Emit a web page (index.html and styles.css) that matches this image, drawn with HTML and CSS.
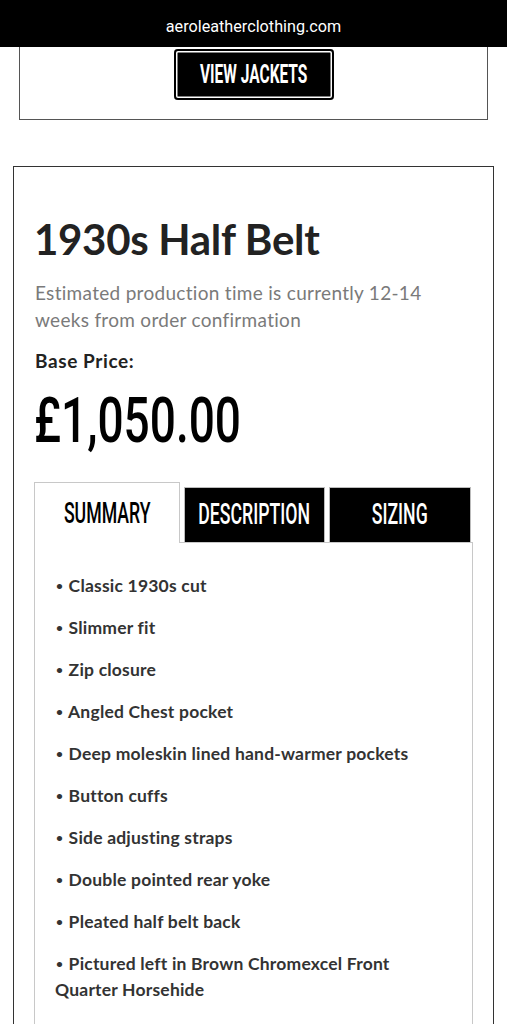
FILE: index.html
```html
<!DOCTYPE html>
<html lang="en">
<head>
<meta charset="utf-8">
<title>1930s Half Belt</title>
<link rel="stylesheet" href="styles.css">
</head>
<body>
<div class="urlbar">aeroleatherclothing.com</div>
<div class="promo">
  <a class="btn" href="#"><span class="cond">VIEW JACKETS</span></a>
</div>
<div class="product">
  <h1 class="title">1930s Half Belt</h1>
  <p class="lead">Estimated production time is currently 12-14 weeks from order confirmation</p>
  <div class="price-label">Base Price:</div>
  <div class="price"><span class="cond">£1,050.00</span></div>
  <div class="tabs">
    <div class="tab active"><span class="cond">SUMMARY</span></div>
    <div class="tab"><span class="cond">DESCRIPTION</span></div>
    <div class="tab"><span class="cond">SIZING</span></div>
  </div>
  <div class="panel">
    <p><span class="dot">•</span> Classic 1930s cut</p>
    <p><span class="dot">•</span> Slimmer fit</p>
    <p><span class="dot">•</span> Zip closure</p>
    <p><span class="dot">•</span> Angled Chest pocket</p>
    <p><span class="dot">•</span> Deep moleskin lined hand-warmer pockets</p>
    <p><span class="dot">•</span> Button cuffs</p>
    <p><span class="dot">•</span> Side adjusting straps</p>
    <p><span class="dot">•</span> Double pointed rear yoke</p>
    <p><span class="dot">•</span> Pleated half belt back</p>
    <p><span class="dot">•</span> Pictured left in Brown Chromexcel Front Quarter Horsehide</p>
  </div>
</div>
</body>
</html>
```
FILE: styles.css
```css
html, body {
  margin: 0;
  padding: 0;
  background: #fff;
}
body {
  font-family: Lato, "Open Sans", sans-serif;
  color: #222;
}
.urlbar {
  height: 47px;
  box-sizing: border-box;
  padding-top: 5px;
  background: #000;
  color: #fff;
  font-family: Roboto, sans-serif;
  font-size: 16.2px;
  display: flex;
  align-items: center;
  justify-content: center;
}
.promo {
  margin: 0 19px;
  border: 1px solid #555;
  border-top: none;
  padding: 2px 0 19px;
  display: flex;
  justify-content: center;
}
.btn {
  width: 160px;
  height: 51px;
  box-sizing: border-box;
  background: #000;
  border-radius: 4px;
  box-shadow: inset 0 0 0 2px #000, inset 0 0 0 3.5px #fff;
  color: #fff;
  text-decoration: none;
  display: flex;
  align-items: center;
  justify-content: center;
  font-size: 25px;
}
.cond {
  display: inline-block;
  font-family: Roboto, sans-serif;
  font-weight: 700;
  white-space: nowrap;
  transform: scaleX(0.62);
  line-height: 1;
}
.product {
  margin: 46px 13px 0;
  border: 1px solid #333;
  padding: 47px 20px 40px;
}
.title {
  margin: 0 0 15px;
  font-family: Lato, sans-serif;
  font-weight: 700;
  font-size: 42px;
  line-height: 50px;
  letter-spacing: -0.3px;
  color: #222;
}
.lead {
  margin: 0 0 16px;
  font-size: 19px;
  line-height: 27px;
  letter-spacing: 0.3px;
  color: #7a7a7a;
  padding-left: 1px;
}
.price-label {
  font-weight: 700;
  font-size: 19px;
  line-height: 24px;
  letter-spacing: 0.6px;
  color: #222;
  padding-left: 1px;
}
.price {
  margin-top: 7px;
  height: 63px;
  font-size: 63px;
  color: #000;
}
.price .cond {
  font-weight: 500;
  transform: scaleX(0.73);
  transform-origin: left center;
}
.tabs {
  margin-top: 39px;
  display: grid;
  grid-template-columns: 146px 141px 142px;
  column-gap: 4px;
  align-items: end;
}
.tab {
  height: 55px;
  box-sizing: border-box;
  background: #000;
  border: 1px solid #bbb;
  border-bottom: none;
  color: #fff;
  display: flex;
  align-items: center;
  justify-content: center;
  font-size: 29.5px;
}
.tab .cond {
  font-weight: 500;
  transform: scaleX(0.6);
}
.tab.active {
  height: 61px;
  margin-bottom: -1px;
  padding-top: 2px;
  background: #fff;
  color: #000;
  border-color: #c8c8c8;
  position: relative;
  z-index: 1;
}
.panel {
  border: 1px solid #c8c8c8;
  padding: 30px 20px 40px;
  font-weight: 700;
  font-size: 17.5px;
  line-height: 26px;
  letter-spacing: 0.2px;
  color: #333;
}
.panel p {
  margin: 0 0 16px;
}
.dot {
  font-size: 12px;
  line-height: 0;
  vertical-align: 2px;
  margin-left: 1px;
  margin-right: 1px;
}
```
